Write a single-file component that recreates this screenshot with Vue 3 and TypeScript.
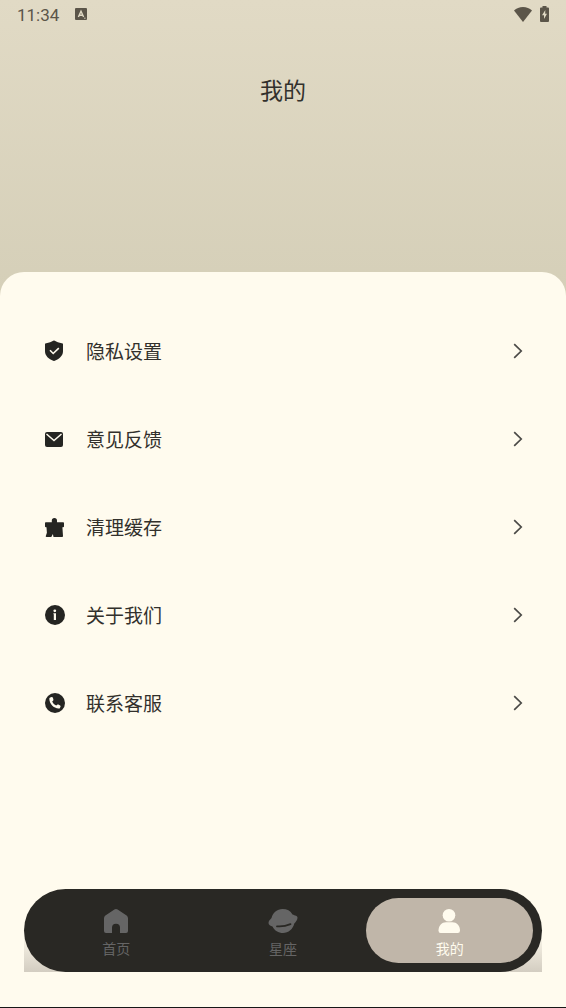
<script setup lang="ts">
import { ref } from 'vue'

type IconName = 'shield' | 'mail' | 'clean' | 'info' | 'phone'
type TabName = 'home' | 'planet' | 'user'

const items: { icon: IconName; label: string }[] = [
  { icon: 'shield', label: '隐私设置' },
  { icon: 'mail', label: '意见反馈' },
  { icon: 'clean', label: '清理缓存' },
  { icon: 'info', label: '关于我们' },
  { icon: 'phone', label: '联系客服' },
]

const tabs: { icon: TabName; label: string }[] = [
  { icon: 'home', label: '首页' },
  { icon: 'planet', label: '星座' },
  { icon: 'user', label: '我的' },
]

const active = ref<TabName>('user')
</script>

<template>
  <div class="page">
    <header class="header">
      <div class="status">
        <span class="time">11:34</span>
        <svg class="badge" viewBox="0 0 12 12" aria-hidden="true">
          <rect width="12" height="12" rx="1" fill="#5b5549" />
          <path d="M3.4 9 6 3.2 8.6 9M4.4 7.2h3.2" fill="none" stroke="#e0d9c4" stroke-width="1.4" />
          <path d="M9 9.4h1.6v1.6H9z" fill="#a59e8d" />
        </svg>
        <span class="spacer"></span>
        <svg class="wifi" viewBox="0 0 18 15" aria-hidden="true">
          <path d="M9 15 0 3.6C2.4 1.4 5.5 0 9 0s6.6 1.4 9 3.6z" fill="#5b5549" />
        </svg>
        <svg class="battery" viewBox="0 0 9 16" aria-hidden="true">
          <path d="M2.5 0h4v1.5H8q1 0 1 1V15q0 1-1 1H1q-1 0-1-1V2.5q0-1 1-1h1.5z" fill="#5b5549" />
          <path d="M5.3 4 2 9.3h2V13l3-5.3H5.2z" fill="#e0d9c4" />
        </svg>
      </div>
      <h1 class="title">我的</h1>
    </header>

    <main class="sheet">
      <ul class="list">
        <li v-for="item in items" :key="item.icon">
          <button type="button" class="row">
            <svg class="row-icon" viewBox="0 0 22 22" aria-hidden="true">
              <template v-if="item.icon === 'shield'">
                <path d="M9.2.8q.8-.6 1.6 0C12.5 2 15 3 17.8 3.2q1.200.1 1.200.9v7.200c0 4.600-3.800 7.800-8.200 9.500q-.8.3-1.600 0C5 19.100 1 16 1 11.300V4.100q0-.8 1.200-.9C5 3 7.500 2 9.200.8z" fill="#252522" />
                <path d="m6 10.300 3.200 3.200 5.600-5.400" fill="none" stroke="#fffbee" stroke-width="1.6" />
              </template>
              <template v-else-if="item.icon === 'mail'">
                <rect x="1" y="4" width="18" height="15" rx="2" fill="#252522" />
                <path d="m2.500 6 7.500 6.500L17.500 6" fill="none" stroke="#fffbee" stroke-width="1.5" />
              </template>
              <template v-else-if="item.icon === 'clean'">
                <path d="M7.800 6.200V4.600a2.600 2.600 0 0 1 5.200 0v1.600h6.200q.8 0 .8.800v3.500q0 .7-1 .7h-.6L19 20q.1 1-.9 1H9.500l-.6-3L7.300 21H2.600q-1.200 0-.8-1l1.100-3.200-.4-5.600H2q-1 0-1-.7V7q0-.8.800-.8z" fill="#252522" />
              </template>
              <template v-else-if="item.icon === 'info'">
                <circle cx="11" cy="11" r="10" fill="#252522" />
                <circle cx="10.800" cy="6.800" r="1.400" fill="#fffbee" />
                <path d="M9.400 9.300H12V16H9.800v-5.800h-.4z" fill="#fffbee" />
              </template>
              <template v-else>
                <circle cx="11" cy="11" r="10" fill="#252522" />
                <path d="M6.200 5.400 7.700 5c.6-.1 1 .2 1.200.8l.5 1.800c.1.500 0 .8-.4 1.200l-.8.700c.8 1.900 2.200 3.200 4 4l1-.8c.4-.3.8-.3 1.200-.1l1.700 1c.5.300.6.700.4 1.200l-.6 1.200c-.3.500-.7.700-1.200.6C9.500 16 5.600 12 5.300 6.700c0-.7.300-1.100.9-1.300z" fill="#fffbee" />
              </template>
            </svg>
            <span class="row-label">{{ item.label }}</span>
            <svg class="chevron" viewBox="0 0 10 16" aria-hidden="true">
              <path d="m1.200 1.200 7 6.800-7 6.800" fill="none" stroke="#4b4a47" stroke-width="1.7" />
            </svg>
          </button>
        </li>
      </ul>
    </main>

    <footer class="footer">
      <div class="nav-base">
        <nav class="nav">
          <button
            v-for="tab in tabs"
            :key="tab.icon"
            type="button"
            class="tab"
            :class="{ active: active === tab.icon }"
            @click="active = tab.icon"
          >
            <svg class="tab-icon" viewBox="0 0 30 26" aria-hidden="true">
              <path
                v-if="tab.icon === 'home'"
                d="M13.400 1.500q1.600-1 3.200 0l9 6.100q1.400 1 1.400 2.600V23q0 2-2 2h-6v-5.200a4 4 0 0 0-8 0V25H5q-2 0-2-2V10.200q0-1.600 1.400-2.600z"
                fill="#656565"
              />
              <template v-else-if="tab.icon === 'planet'">
                <path d="M3.500 10C5 4.500 9 1 14.500 1c4.500 0 8 1.800 10 5.500 2.500 1 5 1.300 5 3.200 0 2-1.600 4.200-3.200 5.800C25 21 20.500 25 15 25c-4.500 0-8.500-2.200-10.500-6.500C2.500 17.800.5 16.800.5 15c0-2 1.600-3.500 3-5z" fill="#656565" />
                <path d="M9 18.300c4.500.4 9-.3 13.500-2.200" fill="none" stroke="#292824" stroke-width="1.8" stroke-linecap="round" />
              </template>
              <template v-else>
                <circle cx="14" cy="7.200" r="6.300" fill="#fffbee" />
                <path d="M3.500 22.500C3.500 17.500 7 14.300 11 14.300h6.500c4 0 7.500 3.200 7.500 8.200q0 2.500-2.300 2.500H5.600q-2.100 0-2.100-2.500z" fill="#fffbee" />
              </template>
            </svg>
            <span>{{ tab.label }}</span>
          </button>
        </nav>
      </div>
    </footer>
  </div>
</template>

<style>
body {
  margin: 0;
}
</style>

<style scoped>
.page {
  box-sizing: border-box;
  min-height: 100vh;
  display: flex;
  flex-direction: column;
  background: #fffbee;
  border-bottom: 1px solid #171717;
  color: #32302c;
  font-family: "Noto Sans CJK SC", sans-serif;
  font-weight: 400;
}

.header {
  box-sizing: border-box;
  height: 296px;
  background: linear-gradient(#e1dac5, #d5cfb8);
}

.status {
  display: flex;
  align-items: center;
  height: 28px;
  padding: 0 17px;
}

.time {
  padding-top: 2px;
  color: #5b5549;
  font: 400 17px/20px Roboto, sans-serif;
}

.badge {
  width: 12px;
  height: 12px;
  margin-left: 16px;
}

.spacer {
  flex: 1;
}

.wifi {
  width: 18px;
  height: 15px;
}

.battery {
  width: 9px;
  height: 16px;
  margin-left: 8px;
}

.title {
  margin: 43px 0 0;
  font-size: 23px;
  line-height: 36px;
  font-weight: 400;
  text-align: center;
}

.sheet {
  flex: 1;
  margin-top: -24px;
  padding: 35px 43px 20px 44px;
  border-radius: 24px 24px 0 0;
  background: #fffbee;
}

.list {
  margin: 0;
  padding: 0;
  list-style: none;
}

.row {
  display: flex;
  align-items: center;
  width: 100%;
  height: 88px;
  padding: 0;
  border: 0;
  background: none;
  color: inherit;
  font: inherit;
  font-size: 19px;
  line-height: 28px;
  text-align: left;
  cursor: pointer;
}

.row-icon {
  width: 22px;
  height: 22px;
}

.row-label {
  flex: 1;
  margin-left: 20px;
}

.chevron {
  width: 10px;
  height: 16px;
}

.footer {
  padding: 0 24px 35px;
}

.nav-base {
  background: linear-gradient(#fffbee 50%, #d3cdc1);
}

.nav {
  display: flex;
  padding: 9px;
  border-radius: 42px;
  background: #292824;
}

.tab {
  flex: 1;
  display: flex;
  flex-direction: column;
  align-items: center;
  gap: 4px;
  height: 65px;
  padding: 10px 0 0;
  border: 0;
  border-radius: 33px;
  background: none;
  color: #656565;
  font: inherit;
  font-size: 14px;
  line-height: 20px;
  cursor: pointer;
}

.tab.active {
  background: #c0b6a9;
  color: #fffbee;
}

.tab-icon {
  width: 30px;
  height: 26px;
}
</style>
